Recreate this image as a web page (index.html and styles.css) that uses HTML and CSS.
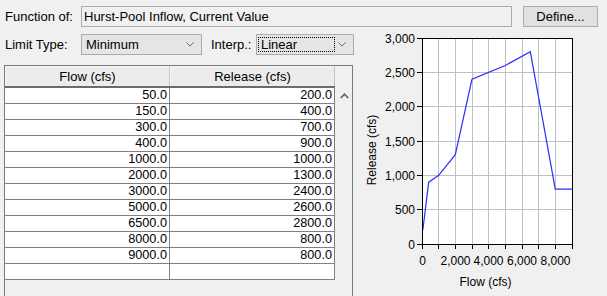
FILE: index.html
```html
<!DOCTYPE html>
<html>
<head>
<meta charset="utf-8">
<link rel="stylesheet" href="styles.css">
</head>
<body>
<div class="top-row">
  <span class="lbl">Function of:</span>
  <div class="field">Hurst-Pool Inflow, Current Value</div>
  <button class="btn">Define...</button>
</div>
<div class="main">
  <div class="left">
    <div class="ctrl-row">
      <span class="lbl">Limit Type:</span>
      <div class="combo combo-limit">
        <span class="combo-text">Minimum</span>
        <svg class="chev" width="8" height="5" viewBox="0 0 8 5"><polyline points="0.5,0.5 4,4 7.5,0.5" fill="none" stroke="#6a6a6a" stroke-width="1"/></svg>
      </div>
      <span class="lbl lbl-interp">Interp.:</span>
      <div class="combo combo-interp">
        <span class="combo-text focus">Linear</span>
        <svg class="chev" width="8" height="5" viewBox="0 0 8 5"><polyline points="0.5,0.5 4,4 7.5,0.5" fill="none" stroke="#6a6a6a" stroke-width="1"/></svg>
      </div>
    </div>
    <div class="grid">
      <div class="grid-body">
        <div class="grid-head">
          <div class="hcell">Flow (cfs)</div>
          <div class="hcell">Release (cfs)</div>
        </div>
        <div class="row"><div class="cell">50.0</div><div class="cell">200.0</div></div>
        <div class="row"><div class="cell">150.0</div><div class="cell">400.0</div></div>
        <div class="row"><div class="cell">300.0</div><div class="cell">700.0</div></div>
        <div class="row"><div class="cell">400.0</div><div class="cell">900.0</div></div>
        <div class="row"><div class="cell">1000.0</div><div class="cell">1000.0</div></div>
        <div class="row"><div class="cell">2000.0</div><div class="cell">1300.0</div></div>
        <div class="row"><div class="cell">3000.0</div><div class="cell">2400.0</div></div>
        <div class="row"><div class="cell">5000.0</div><div class="cell">2600.0</div></div>
        <div class="row"><div class="cell">6500.0</div><div class="cell">2800.0</div></div>
        <div class="row"><div class="cell">8000.0</div><div class="cell">800.0</div></div>
        <div class="row"><div class="cell">9000.0</div><div class="cell">800.0</div></div>
        <div class="row"><div class="cell"></div><div class="cell"></div></div>
      </div>
      <div class="scroll">
        <svg class="up" width="9" height="6" viewBox="0 0 9 6"><polyline points="0.8,5 4.5,1.2 8.2,5" fill="none" stroke="#606060" stroke-width="1.6"/></svg>
      </div>
    </div>
  </div>
  <svg class="chart" width="253" height="266" viewBox="354 30 253 266">
    <rect x="422.5" y="38.5" width="150" height="206" fill="#fff"/>
    <g stroke="#c0c0c0" stroke-width="1">
      <line x1="438.5" y1="38" x2="438.5" y2="244"/>
      <line x1="455.5" y1="38" x2="455.5" y2="244"/>
      <line x1="472.5" y1="38" x2="472.5" y2="244"/>
      <line x1="488.5" y1="38" x2="488.5" y2="244"/>
      <line x1="505.5" y1="38" x2="505.5" y2="244"/>
      <line x1="522.5" y1="38" x2="522.5" y2="244"/>
      <line x1="538.5" y1="38" x2="538.5" y2="244"/>
      <line x1="555.5" y1="38" x2="555.5" y2="244"/>
      <line x1="422" y1="72.5" x2="572" y2="72.5"/>
      <line x1="422" y1="106.5" x2="572" y2="106.5"/>
      <line x1="422" y1="141.5" x2="572" y2="141.5"/>
      <line x1="422" y1="175.5" x2="572" y2="175.5"/>
      <line x1="422" y1="209.5" x2="572" y2="209.5"/>
    </g>
    <polyline points="422.8,230.3 424.5,216.5 427,195.9 428.7,182.2 438.7,175.3 455.3,154.7 472,79.2 505.3,65.5 530.3,51.7 555.3,189.1 572,189.1" fill="none" stroke="#2b2bff" stroke-width="1.2"/>
    <rect x="422.5" y="38.5" width="150" height="206" fill="none" stroke="#000" stroke-width="1"/>
    <g stroke="#000" stroke-width="1">
      <line x1="417" y1="38.5" x2="422" y2="38.5"/>
      <line x1="417" y1="72.5" x2="422" y2="72.5"/>
      <line x1="417" y1="106.5" x2="422" y2="106.5"/>
      <line x1="417" y1="141.5" x2="422" y2="141.5"/>
      <line x1="417" y1="175.5" x2="422" y2="175.5"/>
      <line x1="417" y1="209.5" x2="422" y2="209.5"/>
      <line x1="417" y1="244.5" x2="422" y2="244.5"/>
      <line x1="422.5" y1="244" x2="422.5" y2="249"/>
      <line x1="438.5" y1="244" x2="438.5" y2="249"/>
      <line x1="455.5" y1="244" x2="455.5" y2="249"/>
      <line x1="472.5" y1="244" x2="472.5" y2="249"/>
      <line x1="488.5" y1="244" x2="488.5" y2="249"/>
      <line x1="505.5" y1="244" x2="505.5" y2="249"/>
      <line x1="522.5" y1="244" x2="522.5" y2="249"/>
      <line x1="538.5" y1="244" x2="538.5" y2="249"/>
      <line x1="555.5" y1="244" x2="555.5" y2="249"/>
      <line x1="572.5" y1="244" x2="572.5" y2="249"/>
    </g>
    <g class="ticklbl" text-anchor="end">
      <text x="415" y="42.5">3,000</text>
      <text x="415" y="77">2,500</text>
      <text x="415" y="111">2,000</text>
      <text x="415" y="145.5">1,500</text>
      <text x="415" y="180">1,000</text>
      <text x="415" y="214">500</text>
      <text x="415" y="248.5">0</text>
    </g>
    <g class="ticklbl" text-anchor="middle">
      <text x="422.5" y="264.5">0</text>
      <text x="455.5" y="264.5">2,000</text>
      <text x="488.5" y="264.5">4,000</text>
      <text x="522" y="264.5">6,000</text>
      <text x="555.5" y="264.5">8,000</text>
    </g>
    <text class="ticklbl" x="485.5" y="286" text-anchor="middle">Flow (cfs)</text>
    <text class="ticklbl" transform="translate(376,150) rotate(-90)" text-anchor="middle">Release (cfs)</text>
  </svg>
</div>
</body>
</html>
```

FILE: styles.css
```css
body {
  margin: 0;
  background: #f0f0f0;
  font: 13px "Liberation Sans", Arial, sans-serif;
  color: #000;
  width: 607px;
  height: 296px;
  overflow: hidden;
}

.top-row {
  display: flex;
  align-items: center;
  padding: 6px 0 0 5px;
  height: 21px;
}

.lbl {
  width: 76px;
  flex: none;
  white-space: nowrap;
}

.field {
  width: 431px;
  height: 21px;
  box-sizing: border-box;
  border: 1px solid #acacac;
  padding-left: 2px;
  line-height: 19px;
  background: #f0f0f0;
  flex: none;
}

.btn {
  margin-left: 11px;
  width: 75px;
  height: 21px;
  box-sizing: border-box;
  border: 1px solid #adadad;
  background: #e1e1e1;
  font: inherit;
  color: #000;
  padding: 0;
  flex: none;
}

.main {
  display: flex;
  margin-top: 3px;
}

.left {
  width: 354px;
  flex: none;
}

.ctrl-row {
  display: flex;
  align-items: center;
  padding: 4px 0 0 5px;
  height: 21px;
}

.combo {
  height: 21px;
  box-sizing: border-box;
  border: 1px solid #acacac;
  background: #e5e5e5;
  display: flex;
  align-items: center;
  flex: none;
}

.combo-limit {
  width: 121px;
  padding-left: 4px;
}

.combo-interp {
  width: 98px;
  padding-left: 1px;
}

.lbl-interp {
  width: 45px;
  margin-left: 9px;
}

.combo-text {
  line-height: 15px;
}

.focus {
  width: 77px;
  height: 15px;
  box-sizing: border-box;
  border: 1px dotted #000;
  padding-left: 2px;
  line-height: 13px;
}

.chev {
  margin-left: auto;
  margin-right: 7px;
  display: block;
}

.grid {
  margin: 10px 0 0 4px;
  width: 349px;
  height: 240px;
  box-sizing: border-box;
  border: 1px solid #7a7a7a;
  border-bottom: none;
  display: flex;
  background: #f0f0f0;
}

.grid-body {
  width: 330px;
  flex: none;
}

.grid-head {
  display: flex;
  height: 22px;
  box-sizing: border-box;
  border-bottom: 2px solid #6b6b6b;
}

.hcell {
  width: 165px;
  box-sizing: border-box;
  background: #ececec;
  border-top: 1px solid #f6f6f6;
  border-left: 1px solid #f6f6f6;
  border-right: 1px solid #c4c4c4;
  text-align: center;
  line-height: 19px;
}

.row {
  display: flex;
  height: 16px;
  box-sizing: border-box;
  border-bottom: 1px solid #808080;
  background: #fff;
}

.cell {
  width: 165px;
  box-sizing: border-box;
  border-right: 1px solid #808080;
  text-align: right;
  padding-right: 2px;
  line-height: 15px;
  font-size: 12.7px;
}

.scroll {
  width: 17px;
  flex: none;
}

.up {
  display: block;
  margin: 27px 0 0 5px;
}

.chart {
  display: block;
  flex: none;
}

.ticklbl {
  font-family: "Liberation Sans", Arial, sans-serif;
  font-size: 12px;
  fill: #000;
}
```
